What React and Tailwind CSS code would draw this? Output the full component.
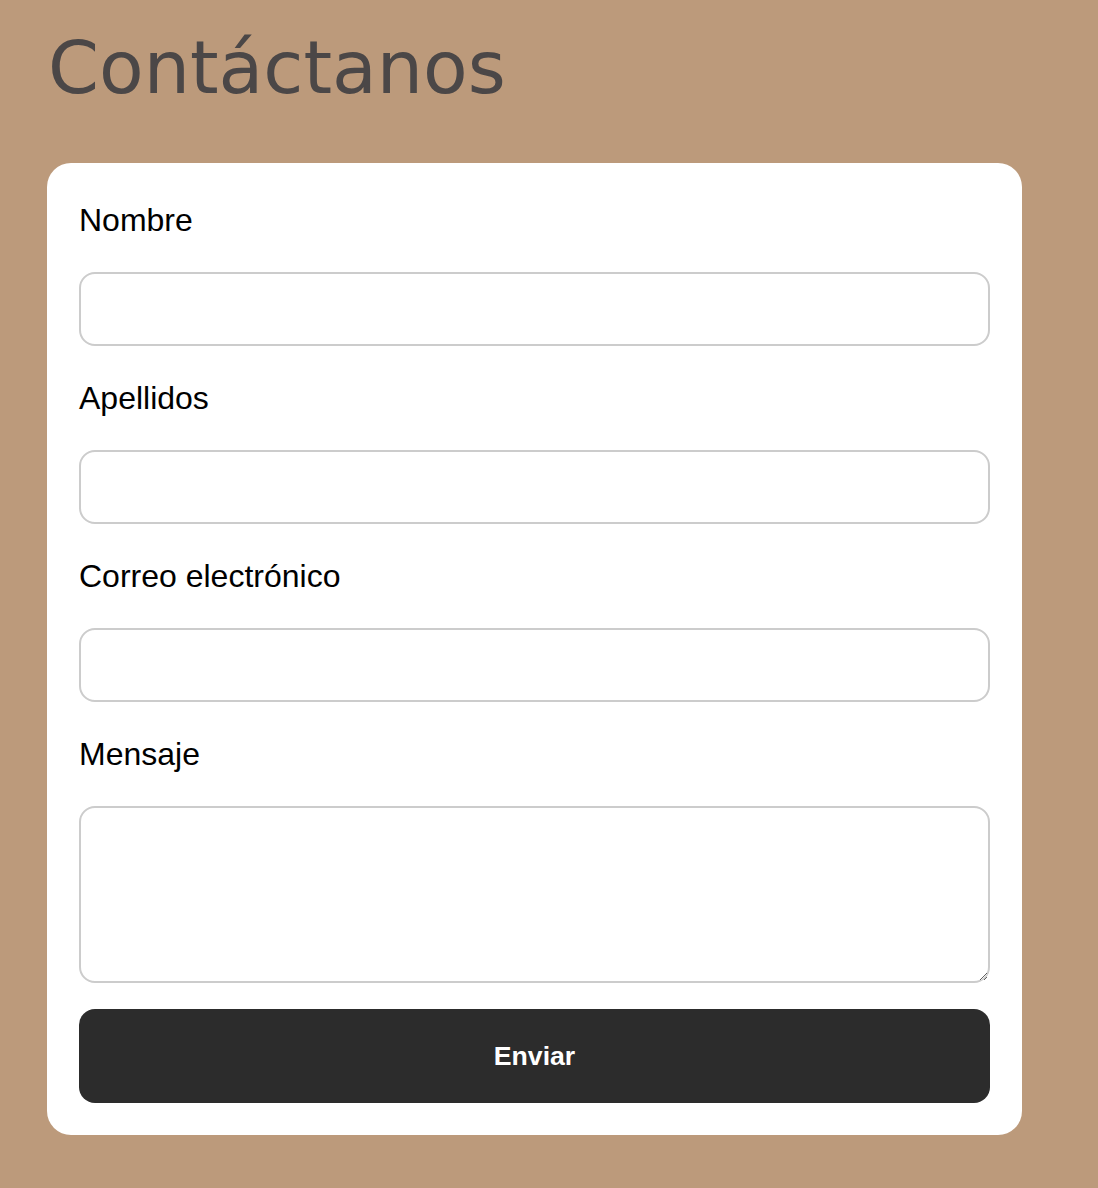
import React from 'react';

// Campos del formulario de contacto
const fields = [
  { id: 'nombre', label: 'Nombre', type: 'text' },
  { id: 'apellidos', label: 'Apellidos', type: 'text' },
  { id: 'email', label: 'Correo electrónico', type: 'email' },
];

const Field = ({ id, label, type }) => (
  <div className="mb-[27px]">
    <label htmlFor={id} className="block text-[32px] leading-[48px] pt-[1px] text-black mb-[28px]">
      {label}
    </label>
    <input
      id={id}
      type={type}
      className="block w-full h-[74px] rounded-[16px] border-2 border-[#cccccc] bg-white px-4 text-[26px] outline-none"
    />
  </div>
);

const App = () => {
  return (
    <div
      className="min-h-screen bg-[#bc9a7b] pt-[32px] pb-[53px] pl-[47px]"
      style={{ fontFamily: '"Liberation Sans", Arial, sans-serif' }}
    >
      <h1
        className="text-[73px] leading-[72px] text-[#4b4747] mb-[59px] pl-[1px]"
        style={{ fontFamily: '"DejaVu Sans", sans-serif' }}
      >
        Contáctanos
      </h1>

      <form className="w-[975px] bg-white rounded-[24px] p-[32px]">
        {fields.map((f) => (
          <Field key={f.id} {...f} />
        ))}

        <label htmlFor="mensaje" className="block text-[32px] leading-[48px] pt-[1px] text-black mb-[28px]">
          Mensaje
        </label>
        <textarea
          id="mensaje"
          className="block w-full h-[177px] rounded-[16px] border-2 border-[#cccccc] bg-white p-4 text-[26px] outline-none mb-[26px]"
        />

        <button
          type="button"
          className="block w-full h-[94px] rounded-[16px] bg-[#2c2c2c] text-white font-bold text-[26.67px]"
        >
          Enviar
        </button>
      </form>
    </div>
  );
};

export default App;
